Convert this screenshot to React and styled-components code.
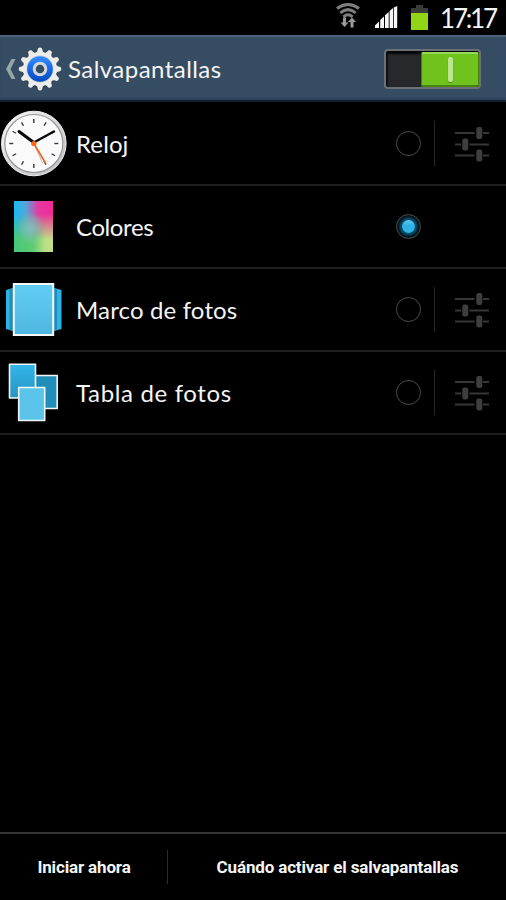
import React from "react";
import styled, { createGlobalStyle } from "styled-components";

const GlobalStyle = createGlobalStyle`
  * { box-sizing: border-box; }
  body { margin: 0; background: #000; }
`;

const Screen = styled.div`
  display: flex;
  flex-direction: column;
  width: 506px;
  height: 900px;
  overflow: hidden;
  background: #000;
  color: #f4f4f4;
  font-family: Lato, "Open Sans", sans-serif;
`;

const StatusBar = styled.div`
  display: flex;
  justify-content: flex-end;
  height: 35px;
  flex: none;
`;

const Time = styled.time`
  width: 66px;
  padding-left: 0;
  line-height: 37px;
  font-size: 26px;
  letter-spacing: -2.2px;
  white-space: nowrap;
`;

const Header = styled.header`
  display: flex;
  align-items: center;
  flex: none;
  height: 67px;
  padding: 0 25px 0 4px;
  background: #354c63;
  border-top: 2px solid #4c657e;
  border-bottom: 2px solid #102333;
  box-shadow: inset 0 -2px 1px #2c435a;
`;

const Title = styled.h1`
  flex: 1;
  margin: 0 0 0 5px;
  font-size: 24px;
  line-height: 32px;
  font-weight: 400;
  letter-spacing: ${(p) => p.$spacing}px;
  white-space: nowrap;
`;

const Switch = styled.button`
  display: flex;
  justify-content: flex-end;
  width: 97px;
  height: 40px;
  padding: 1px 0;
  border: 2px solid #6b7175;
  border-radius: 4px;
  background: #27282c;
  box-shadow: inset 0 3px 2px #050608, inset 2px 0 1px #111216;
`;

const SwitchThumb = styled.span`
  display: flex;
  align-items: center;
  justify-content: center;
  width: 58px;
  height: 35px;
  border: 1px solid #47820f;
  border-top: 2px solid #95d75b;
  border-bottom-width: 2px;
  border-radius: 2px;
  background: #6fc31c;
`;

const SwitchMark = styled.span`
  width: 5px;
  height: 25px;
  border-radius: 2px;
  background: #bce591;
  box-shadow: 0 1px 1px #4b861a;
`;

const List = styled.ul`
  flex: 1;
  margin: 0;
  padding: 1px 0 0;
  list-style: none;
`;

const Row = styled.li`
  display: flex;
  align-items: center;
  height: 83px;
  border-bottom: 2px solid #1e1f20;
`;

const RowIcon = styled.span`
  display: flex;
  width: 76px;
  height: 81px;
  margin-top: -2px;
  flex: none;
`;

const RowLabel = styled.span`
  flex: 1;
  padding-top: 1px;
  font-size: 24px;
  line-height: 32px;
  letter-spacing: ${(p) => p.$spacing}px;
  white-space: nowrap;
`;

const Radio = styled.span`
  display: flex;
  align-items: center;
  justify-content: center;
  width: 25px;
  height: 25px;
  margin-right: 13px;
  border: 1px solid #4b4b4b;
  border-radius: 50%;
  background: ${(p) => (p.$checked ? "radial-gradient(circle, #084a65 48%, #061620 62%)" : "transparent")};
`;

const RadioDot = styled.span`
  width: 13px;
  height: 13px;
  border-radius: 50%;
  background: linear-gradient(#62cdf4, #2fb3e4 40%);
`;

const Options = styled.span`
  display: flex;
  align-items: center;
  width: 72px;
  height: 45px;
  padding-left: 19px;
  border-left: ${(p) => (p.$empty ? "0" : "1px solid #262626")};
`;

const Footer = styled.footer`
  display: flex;
  align-items: center;
  flex: none;
  height: 68px;
  padding-bottom: 1px;
  border-top: 2px solid #343434;
`;

const FooterButton = styled.button`
  width: ${(p) => p.$width}px;
  height: 34px;
  padding: 0 0 0 1px;
  border: 0;
  border-right: ${(p) => (p.$divided ? "1px solid #2c2c2c" : "0")};
  background: none;
  color: #f4f4f4;
  font: 700 17px/34px Roboto, sans-serif;
  letter-spacing: ${(p) => p.$spacing}px;
  white-space: nowrap;
`;

const StatusIcons = () => (
  <svg width="104" height="35" viewBox="336 0 104 35">
    <g fill="none" stroke="#7e7e7e" strokeWidth="3">
      <path d="M337 8.500Q348 .5 359 8.500" />
      <path d="M340.300 12.800Q348 6.500 355.700 12.800" />
      <path d="M343.400 16.800Q348 12.800 352.600 16.800" />
    </g>
    <path d="M343 18h3v5h2.500l-4 4.500-4-4.500H343z M350.500 28v-5.500H348l4-4.500 4 4.500h-2.500V28z" transform="translate(0 -.5)" fill="#999" />
    <path d="M375 28v-2.500l4-4V28z M380.200 28v-8l3.800-3.500V28z M385 28V15.200l3.700-3.200v16z M389.600 28V11l3.400-3v20z M393.800 28V7.500l3.400-1.500v22z" fill="#f7f7f7" />
    <path d="M416 5h7v3h5v5h-17V8h5z" fill="#3b3b3b" />
    <path d="M411 13h17v17h-17z" fill="#91d516" />
  </svg>
);

const Chevron = () => (
  <svg width="13" height="24" viewBox="4 57 13 24">
    <path d="M11.500 59h4l-5 10 5 10h-4L6 69z" fill="#96a6a9" />
  </svg>
);

const teeth = Array.from({ length: 12 }, (_, i) => i * 30);

const Gear = () => (
  <svg width="46" height="46" viewBox="-23 -23 46 46">
    <defs>
      <linearGradient id="gearBlue" x1="0" y1="0" x2="0" y2="1">
        <stop offset="0" stopColor="#368dff" />
        <stop offset=".5" stopColor="#1768e6" />
        <stop offset="1" stopColor="#0648bd" />
      </linearGradient>
    </defs>
    <g fill="#26394b" opacity=".45" transform="translate(0 1.5)">
      <circle r="18" />
    </g>
    {teeth.map((a) => (
      <path key={a} d="M-4-16Q-2.400-17.500-2-20.500Q0-22.300 2-20.500Q2.400-17.500 4-16z" transform={`rotate(${a})`} fill="#ecece9" />
    ))}
    <circle r="17" fill="#ecece9" />
    <circle r="13.500" fill="#b9c7d8" />
    <circle r="12.800" fill="url(#gearBlue)" />
    <circle r="5.800" fill="#354c63" stroke="#d4d8db" strokeWidth="3" />
  </svg>
);

const ClockIcon = () => (
  <svg width="76" height="81" viewBox="0 102 76 81">
    <defs>
      <linearGradient id="clockRim" x1="0" y1="0" x2="1" y2="1">
        <stop offset="0" stopColor="#f7f7f7" />
        <stop offset="1" stopColor="#bcbcbf" />
      </linearGradient>
    </defs>
    <g transform="translate(33.800 143.500)">
      <circle r="32.300" fill="url(#clockRim)" stroke="#f2f2f2" />
      <circle r="29" fill="#fafafa" stroke="#929599" strokeWidth="1.200" />
      {teeth.map((a) => (
        <path key={a} d="M0-24.500v4" transform={`rotate(${a})`} stroke="#37393d" strokeWidth="1.400" />
      ))}
      <path d="M0 0L9 20" stroke="#bbb" strokeWidth="1" />
      <path d="M-14.800-12L0-1" stroke="#080808" strokeWidth="3" strokeLinecap="round" />
      <path d="M0-1L21-12.500" stroke="#080808" strokeWidth="2.400" />
      <path d="M0 0L12 20" stroke="#f26419" strokeWidth="1.600" />
      <circle r="2.600" fill="#ff6811" />
    </g>
  </svg>
);

const ColorsIcon = () => (
  <svg width="76" height="81" viewBox="0 185 76 81">
    <defs>
      <linearGradient id="paletteTop">
        <stop offset="0" stopColor="#18b9f3" />
        <stop offset=".3" stopColor="#55a6da" />
        <stop offset=".62" stopColor="#e43aa0" />
        <stop offset="1" stopColor="#f32a99" />
      </linearGradient>
      <linearGradient id="paletteBottom">
        <stop offset="0" stopColor="#47c777" />
        <stop offset=".5" stopColor="#5fcc75" />
        <stop offset=".8" stopColor="#b9e085" />
        <stop offset="1" stopColor="#c9dc86" />
      </linearGradient>
      <linearGradient id="paletteFade" x1="0" y1="0" x2="0" y2="1">
        <stop offset=".25" stopColor="#fff" stopOpacity="0" />
        <stop offset=".75" stopColor="#fff" />
      </linearGradient>
      <radialGradient id="paletteCenter">
        <stop offset="0" stopColor="#86bfc0" stopOpacity=".9" />
        <stop offset="1" stopColor="#86bfc0" stopOpacity="0" />
      </radialGradient>
      <mask id="paletteMask"><path d="M14 201h39v51H14z" fill="url(#paletteFade)" /></mask>
    </defs>
    <path d="M14 201h39v51H14z" fill="url(#paletteTop)" />
    <path d="M14 201h39v51H14z" fill="url(#paletteBottom)" mask="url(#paletteMask)" />
    <ellipse cx="31" cy="228" rx="14" ry="17" fill="url(#paletteCenter)" />
  </svg>
);

const FrameIcon = () => (
  <svg width="76" height="81" viewBox="0 268 76 81">
    <defs>
      <linearGradient id="frameBlue" x1="0" y1="0" x2="0" y2="1">
        <stop offset="0" stopColor="#61cef5" />
        <stop offset="1" stopColor="#50b7df" />
      </linearGradient>
    </defs>
    <path d="M6 290l7-2v43l-7-2z M54 288l7.500 2v39l-7.500 2z" fill="#2db4e4" />
    <path d="M9.500 289l3.500-1v43l-3.500-1z M54 288l3 1v41l-3 1z" fill="#238db9" />
    <path d="M13.800 284h39.400v51H13.800z" fill="url(#frameBlue)" stroke="#f6f8f9" strokeWidth="2" />
  </svg>
);

const TableIcon = () => (
  <svg width="76" height="81" viewBox="0 351 76 81">
    <defs>
      <linearGradient id="tableBlue" x1="0" y1="0" x2="0" y2="1">
        <stop offset="0" stopColor="#32b7e9" />
        <stop offset="1" stopColor="#2693c2" />
      </linearGradient>
    </defs>
    <g stroke="#f2f6f8" strokeWidth="1.600" strokeLinejoin="round">
      <path d="M34.500 375.500h22.700v33H34.500z" fill="#218eb9" />
      <path d="M9.500 364.300h26v33.700h-26z" fill="url(#tableBlue)" />
      <path d="M18.700 387.500h26v33h-26z" fill="#5ac4eb" />
    </g>
  </svg>
);

const SlidersIcon = () => (
  <svg width="36" height="38" viewBox="454 125 36 38">
    <path d="M455 133h19.500M483 133h6M455 144.500h6M469.500 144.500H489M455 155.500h19.500M483 155.500h6" stroke="#373737" strokeWidth="2" />
    <g fill="#3e3e3e">
      <rect x="476.300" y="127" width="6" height="12" rx="2.200" />
      <rect x="462.300" y="138.500" width="6" height="12" rx="2.200" />
      <rect x="476.300" y="149.500" width="6" height="12" rx="2.200" />
    </g>
  </svg>
);

const savers = [
  { label: "Reloj", spacing: 0.1, Icon: ClockIcon, options: true },
  { label: "Colores", spacing: -0.4, Icon: ColorsIcon, checked: true },
  { label: "Marco de fotos", spacing: 0.15, Icon: FrameIcon, options: true },
  { label: "Tabla de fotos", spacing: 0.65, Icon: TableIcon, options: true },
];

export default function App() {
  return (
    <>
      <GlobalStyle />
      <Screen>
        <StatusBar>
          <StatusIcons />
          <Time>17:17</Time>
        </StatusBar>
        <Header>
          <Chevron />
          <Gear />
          <Title $spacing={0.45}>Salvapantallas</Title>
          <Switch aria-label="Salvapantallas">
            <SwitchThumb><SwitchMark /></SwitchThumb>
          </Switch>
        </Header>
        <List>
          {savers.map(({ label, spacing, Icon, checked, options }) => (
            <Row key={label}>
              <RowIcon><Icon /></RowIcon>
              <RowLabel $spacing={spacing}>{label}</RowLabel>
              <Radio $checked={checked}>{checked && <RadioDot />}</Radio>
              <Options $empty={!options}>{options && <SlidersIcon />}</Options>
            </Row>
          ))}
        </List>
        <Footer>
          <FooterButton $width={168} $divided $spacing={-0.15}>Iniciar ahora</FooterButton>
          <FooterButton $width={338} $spacing={-0.15}>Cuándo activar el salvapantallas</FooterButton>
        </Footer>
      </Screen>
    </>
  );
}
